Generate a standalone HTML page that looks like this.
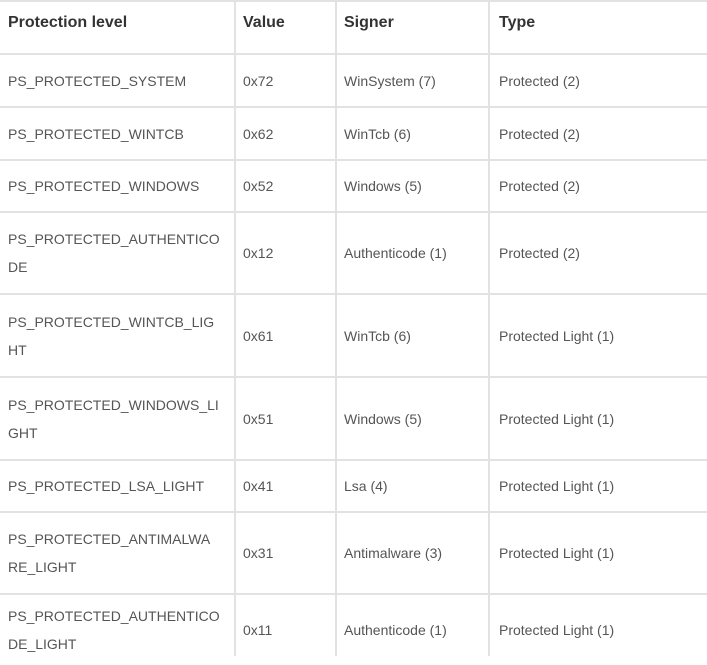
<!DOCTYPE html>
<html><head><style>
body{margin:0;background:#fff;width:707px;height:656px;overflow:hidden;font-family:"Liberation Sans",sans-serif;color:#555;font-size:14px;}
.h{position:absolute;left:0;width:707px;height:2px;background:#e2e2e2}
.v{position:absolute;top:0;height:656px;width:2px;background:#e2e2e2}
.t{position:absolute;line-height:28px;white-space:nowrap;display:flex;align-items:center}
.b{font-weight:bold;color:#333;font-size:16px}
</style></head><body>
<div class="h" style="top:0"></div>
<div class="h" style="top:53px"></div>
<div class="h" style="top:106px"></div>
<div class="h" style="top:159px"></div>
<div class="h" style="top:211px"></div>
<div class="h" style="top:293px"></div>
<div class="h" style="top:376px"></div>
<div class="h" style="top:459px"></div>
<div class="h" style="top:511px"></div>
<div class="h" style="top:593px"></div>
<div class="v" style="left:234px"></div>
<div class="v" style="left:335px"></div>
<div class="v" style="left:488px"></div>

<div class="t b" style="left:8px;top:0px;height:46px">Protection level</div>
<div class="t b" style="left:243px;top:0px;height:46px">Value</div>
<div class="t b" style="left:344px;top:0px;height:46px">Signer</div>
<div class="t b" style="left:499px;top:0px;height:46px">Type</div>

<div class="t" style="left:8px;top:55px;height:51px">PS_PROTECTED_SYSTEM</div>
<div class="t" style="left:243px;top:55px;height:51px">0x72</div>
<div class="t" style="left:344px;top:55px;height:51px">WinSystem (7)</div>
<div class="t" style="left:499px;top:55px;height:51px">Protected (2)</div>

<div class="t" style="left:8px;top:108px;height:51px">PS_PROTECTED_WINTCB</div>
<div class="t" style="left:243px;top:108px;height:51px">0x62</div>
<div class="t" style="left:344px;top:108px;height:51px">WinTcb (6)</div>
<div class="t" style="left:499px;top:108px;height:51px">Protected (2)</div>

<div class="t" style="left:8px;top:161px;height:50px">PS_PROTECTED_WINDOWS</div>
<div class="t" style="left:243px;top:161px;height:50px">0x52</div>
<div class="t" style="left:344px;top:161px;height:50px">Windows (5)</div>
<div class="t" style="left:499px;top:161px;height:50px">Protected (2)</div>

<div class="t" style="left:8px;top:213px;height:80px">PS_PROTECTED_AUTHENTICO<br>DE</div>
<div class="t" style="left:243px;top:213px;height:80px">0x12</div>
<div class="t" style="left:344px;top:213px;height:80px">Authenticode (1)</div>
<div class="t" style="left:499px;top:213px;height:80px">Protected (2)</div>

<div class="t" style="left:8px;top:295px;height:81px">PS_PROTECTED_WINTCB_LIG<br>HT</div>
<div class="t" style="left:243px;top:295px;height:81px">0x61</div>
<div class="t" style="left:344px;top:295px;height:81px">WinTcb (6)</div>
<div class="t" style="left:499px;top:295px;height:81px">Protected Light (1)</div>

<div class="t" style="left:8px;top:378px;height:81px">PS_PROTECTED_WINDOWS_LI<br>GHT</div>
<div class="t" style="left:243px;top:378px;height:81px">0x51</div>
<div class="t" style="left:344px;top:378px;height:81px">Windows (5)</div>
<div class="t" style="left:499px;top:378px;height:81px">Protected Light (1)</div>

<div class="t" style="left:8px;top:461px;height:50px">PS_PROTECTED_LSA_LIGHT</div>
<div class="t" style="left:243px;top:461px;height:50px">0x41</div>
<div class="t" style="left:344px;top:461px;height:50px">Lsa (4)</div>
<div class="t" style="left:499px;top:461px;height:50px">Protected Light (1)</div>

<div class="t" style="left:8px;top:513px;height:80px">PS_PROTECTED_ANTIMALWA<br>RE_LIGHT</div>
<div class="t" style="left:243px;top:513px;height:80px">0x31</div>
<div class="t" style="left:344px;top:513px;height:80px">Antimalware (3)</div>
<div class="t" style="left:499px;top:513px;height:80px">Protected Light (1)</div>

<div class="t" style="left:8px;top:595px;height:70px">PS_PROTECTED_AUTHENTICO<br>DE_LIGHT</div>
<div class="t" style="left:243px;top:595px;height:70px">0x11</div>
<div class="t" style="left:344px;top:595px;height:70px">Authenticode (1)</div>
<div class="t" style="left:499px;top:595px;height:70px">Protected Light (1)</div>
</body></html>
